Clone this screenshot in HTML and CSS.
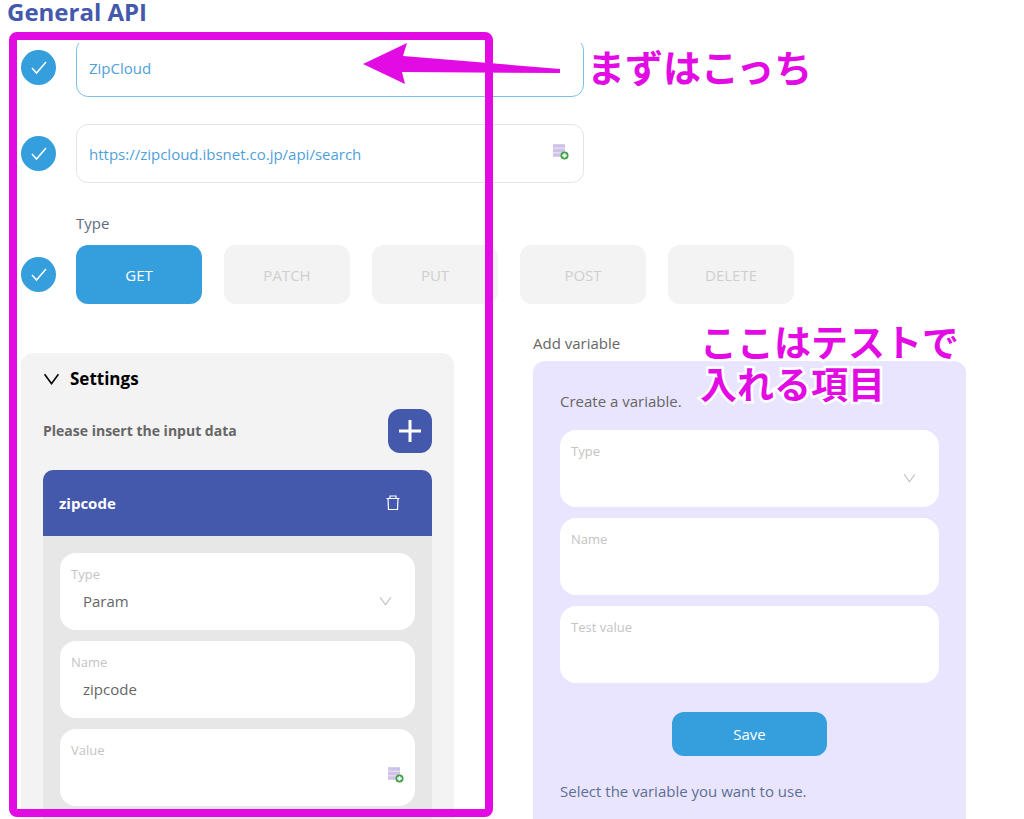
FILE: index.html
```html
<!DOCTYPE html>
<html lang="ja">
<head>
    <meta charset="UTF-8">
    <meta name="viewport" content="width=device-width, initial-scale=1.0">
    <title>General API</title>
    <link rel="stylesheet" href="styles.css">
</head>
<body>

<!-- shared icons -->
<svg class="sprite" aria-hidden="true">
    <symbol id="icon-check" viewBox="0 0 18 18">
        <path d="M2 9l4.500 5L16 3" fill="none" stroke="#fff" stroke-width="1.500"/>
    </symbol>
    <symbol id="icon-down" viewBox="0 0 16 16">
        <path d="M1.500 3L8 12l6.500-9" fill="none" stroke="currentColor" stroke-width="1.500"/>
    </symbol>
    <symbol id="icon-data" viewBox="0 0 16 16">
        <path d="M0 0h12v13H0z" fill="#e4dbf3"/>
        <path d="M0 .500h12v3H0zM0 5h12v3H0zM0 9.500h12v3H0z" fill="#cfc2e8"/>
        <circle cx="11.500" cy="11.500" r="4" fill="#43a047"/>
        <path d="M11.500 9.200v4.600M9.200 11.500h4.600" stroke="#fff" stroke-width="1.800"/>
    </symbol>
</svg>

<header class="page-header">
    <h1>General API</h1>
</header>

<main class="content">
    <form class="api-form">
        <div class="row">
            <span class="check"><svg><use href="#icon-check"/></svg></span>
            <div class="text-box active">
                <input type="text" name="title" value="ZipCloud" aria-label="API name">
            </div>
        </div>
        <div class="row">
            <span class="check"><svg><use href="#icon-check"/></svg></span>
            <div class="text-box">
                <input type="text" name="url" value="https://zipcloud.ibsnet.co.jp/api/search" aria-label="URL">
                <button type="button" class="data-button" aria-label="Insert variable"><svg><use href="#icon-data"/></svg></button>
            </div>
        </div>
        <p class="type-label">Type</p>
        <div class="row methods">
            <span class="check"><svg><use href="#icon-check"/></svg></span>
            <button type="button" class="method selected">GET</button>
            <button type="button" class="method">PATCH</button>
            <button type="button" class="method">PUT</button>
            <button type="button" class="method">POST</button>
            <button type="button" class="method">DELETE</button>
        </div>

        <div class="columns">
            <section class="settings">
                <h2><svg><use href="#icon-down"/></svg>Settings</h2>
                <div class="insert">
                    <h3>Please insert the input data</h3>
                    <button type="button" class="add-button" aria-label="Add">
                        <svg viewBox="0 0 22 22"><path d="M11 0v22M0 11h22" stroke="#fff" stroke-width="3"/></svg>
                    </button>
                </div>
                <div class="card">
                    <div class="card-header">
                        <h3>zipcode</h3>
                        <button type="button" class="delete-button" aria-label="Delete">
                            <svg viewBox="0 0 14 16"><path d="M.500 3.500h13M4 3.500v-2.500h6v2.500M2 3.500l.500 11h9l.500-11" fill="none" stroke="#fff" stroke-width="1.200"/></svg>
                        </button>
                    </div>
                    <div class="fields">
                        <div class="field">
                            <label for="param-type">Type</label>
                            <div class="field-value">
                                <select id="param-type"><option>Param</option><option>Header</option></select>
                                <svg class="arrow"><use href="#icon-down"/></svg>
                            </div>
                        </div>
                        <div class="field">
                            <label for="param-name">Name</label>
                            <div class="field-value">
                                <input type="text" id="param-name" value="zipcode">
                            </div>
                        </div>
                        <div class="field">
                            <label for="param-value">Value</label>
                            <div class="field-value">
                                <input type="text" id="param-value">
                                <button type="button" class="data-button" aria-label="Insert variable"><svg><use href="#icon-data"/></svg></button>
                            </div>
                        </div>
                    </div>
                </div>
            </section>

            <section class="variables">
                <h2>Add variable</h2>
                <div class="variable-panel">
                    <p>Create a variable.</p>
                    <div class="field">
                        <label for="var-type">Type</label>
                        <div class="field-value">
                            <select id="var-type"><option></option><option>String</option></select>
                            <svg class="arrow"><use href="#icon-down"/></svg>
                        </div>
                    </div>
                    <div class="field">
                        <label for="var-name">Name</label>
                        <div class="field-value"><input type="text" id="var-name"></div>
                    </div>
                    <div class="field">
                        <label for="var-test">Test value</label>
                        <div class="field-value"><input type="text" id="var-test"></div>
                    </div>
                    <button type="button" class="save-button">Save</button>
                    <p class="select-text">Select the variable you want to use.</p>
                </div>
            </section>
        </div>
    </form>
</main>

<!-- notes drawn over the form -->
<div class="note-frame"></div>
<svg class="note-arrow" viewBox="0 0 198 42"><path d="M0 21L44 0L40 13L197 26V30L39 29L42 41Z" fill="#e30be3"/></svg>
<p class="note note-first">まずはこっち</p>
<p class="note note-second">ここはテストで<br>入れる項目</p>

</body>
</html>
```
FILE: styles.css
```css
* {
    box-sizing: border-box;
}
body {
    font-family: "Open Sans", "Noto Sans CJK JP", sans-serif;
    font-size: 15px;
    line-height: 20px;
    color: #666;
    background-color: #fff;
    margin: 0;
    height: 100vh;
    overflow: hidden;
    position: relative;
    display: flex;
    flex-direction: column;
}
h1, h2, h3, p {
    margin: 0;
}
button, input, select {
    font: inherit;
    color: inherit;
    border: none;
    background: none;
    padding: 0;
    min-width: 0;
}
button {
    cursor: pointer;
}
svg {
    display: block;
}
.sprite {
    position: absolute;
    width: 0;
    height: 0;
}

.page-header {
    height: 43px;
    padding: 0 7px;
    flex-shrink: 0;
}
h1 {
    font-size: 24px;
    line-height: 24px;
    color: #4459ac;
}

.content {
    flex: 1;
    min-height: 0;
    overflow: hidden;
}
/* the form is scrolled a little under the header */
.api-form {
    margin: -5px 58px 0 21px;
}
.row {
    display: flex;
    align-items: center;
    gap: 20px;
    margin-bottom: 27px;
}
.check {
    width: 35px;
    height: 35px;
    border-radius: 50%;
    background-color: #359fde;
    display: flex;
    align-items: center;
    justify-content: center;
    flex-shrink: 0;
}
.check svg {
    width: 18px;
    height: 18px;
}
.text-box {
    display: flex;
    align-items: center;
    width: 100%;
    max-width: 508px;
    height: 59px;
    padding: 0 14px 0 12px;
    border: 1px solid #e4e4e4;
    border-radius: 12px;
    color: #4f9fdb;
}
.text-box.active {
    border-color: #7cc0ea;
}
.text-box input {
    flex: 1;
}
.data-button {
    padding-bottom: 4px;
}
.data-button svg {
    width: 16px;
    height: 16px;
}
.type-label {
    margin: 30px 0 12px 55px;
    color: #5f6b80;
}
.methods {
    gap: 22px;
    margin-bottom: 29px;
}
.methods .check {
    margin-right: -2px;
}
.method {
    width: 126px;
    height: 59px;
    border-radius: 12px;
    background-color: #f3f3f3;
    color: #cfcfcf;
}
.method.selected {
    background-color: #359fde;
    color: #fff;
}

.columns {
    display: grid;
    grid-template-columns: 1fr 1fr;
    gap: 79px;
}
.settings {
    margin-top: 20px;
    padding: 14px 22px 22px;
    background-color: #f3f3f3;
    border-radius: 12px;
}
.settings h2 {
    display: flex;
    align-items: center;
    gap: 10px;
    font-size: 17px;
    line-height: 24px;
    color: #000;
}
.settings h2 svg {
    width: 17px;
    height: 17px;
}
.insert {
    display: flex;
    align-items: center;
    justify-content: space-between;
    margin: 18px 0 17px;
}
.insert h3 {
    font-size: 14px;
}
.add-button {
    width: 44px;
    height: 44px;
    border-radius: 12px;
    background-color: #4459ac;
    display: flex;
    align-items: center;
    justify-content: center;
}
.add-button svg {
    width: 22px;
    height: 22px;
}
.card {
    background-color: #e7e7e7;
    border-radius: 10px 10px 0 0;
    overflow: hidden;
}
.card-header {
    display: flex;
    align-items: center;
    justify-content: space-between;
    height: 66px;
    padding: 0 32px 0 16px;
    background-color: #4459ac;
    color: #fff;
}
.card-header h3 {
    font-size: 15px;
}
.delete-button svg {
    width: 14px;
    height: 16px;
}
.fields {
    padding: 17px 17px 6px;
}
.field {
    height: 77px;
    margin-bottom: 11px;
    padding: 11px;
    background-color: #fff;
    border-radius: 16px;
}
.field label {
    display: block;
    font-size: 13px;
    line-height: 20px;
    color: #c4c4c4;
}
.field-value {
    display: flex;
    align-items: center;
    height: 34px;
    padding-left: 12px;
    position: relative;
}
.field-value input, .field-value select {
    flex: 1;
    height: 28px;
    appearance: none;
}
.arrow {
    position: absolute;
    right: 12px;
    width: 13px;
    height: 13px;
    color: #c4c4c4;
    pointer-events: none;
}

.variables {
    display: flex;
    flex-direction: column;
}
.variables h2 {
    font-size: 15px;
    line-height: 20px;
    font-weight: normal;
    margin-bottom: 8px;
}
.variable-panel {
    flex: 1;
    padding: 30px 27px;
    background-color: #e9e5ff;
    border-radius: 12px;
}
.variable-panel .field {
    margin-top: 11px;
}
.variable-panel p + .field {
    margin-top: 19px;
}
.save-button {
    display: block;
    width: 155px;
    height: 44px;
    margin: 29px auto 25px;
    border-radius: 12px;
    background-color: #359fde;
    color: #fff;
}
.select-text {
    color: #5d7092;
}

.note-frame {
    position: absolute;
    top: 32px;
    left: 9px;
    width: 484px;
    bottom: 2px;
    border: 8px solid #e30be3;
    border-radius: 8px;
    pointer-events: none;
}
.note-arrow {
    position: absolute;
    top: 43px;
    left: 363px;
    width: 198px;
    height: 42px;
}
.note {
    position: absolute;
    font-family: "Noto Sans CJK JP", sans-serif;
    font-size: 37px;
    font-weight: bold;
    line-height: 42px;
    color: #e30be3;
    white-space: nowrap;
    -webkit-text-stroke: 5px #fff;
    paint-order: stroke fill;
}
.note-first {
    top: 45px;
    left: 587px;
    font-size: 38px;
}
.note-second {
    top: 320px;
    left: 700px;
}
```
